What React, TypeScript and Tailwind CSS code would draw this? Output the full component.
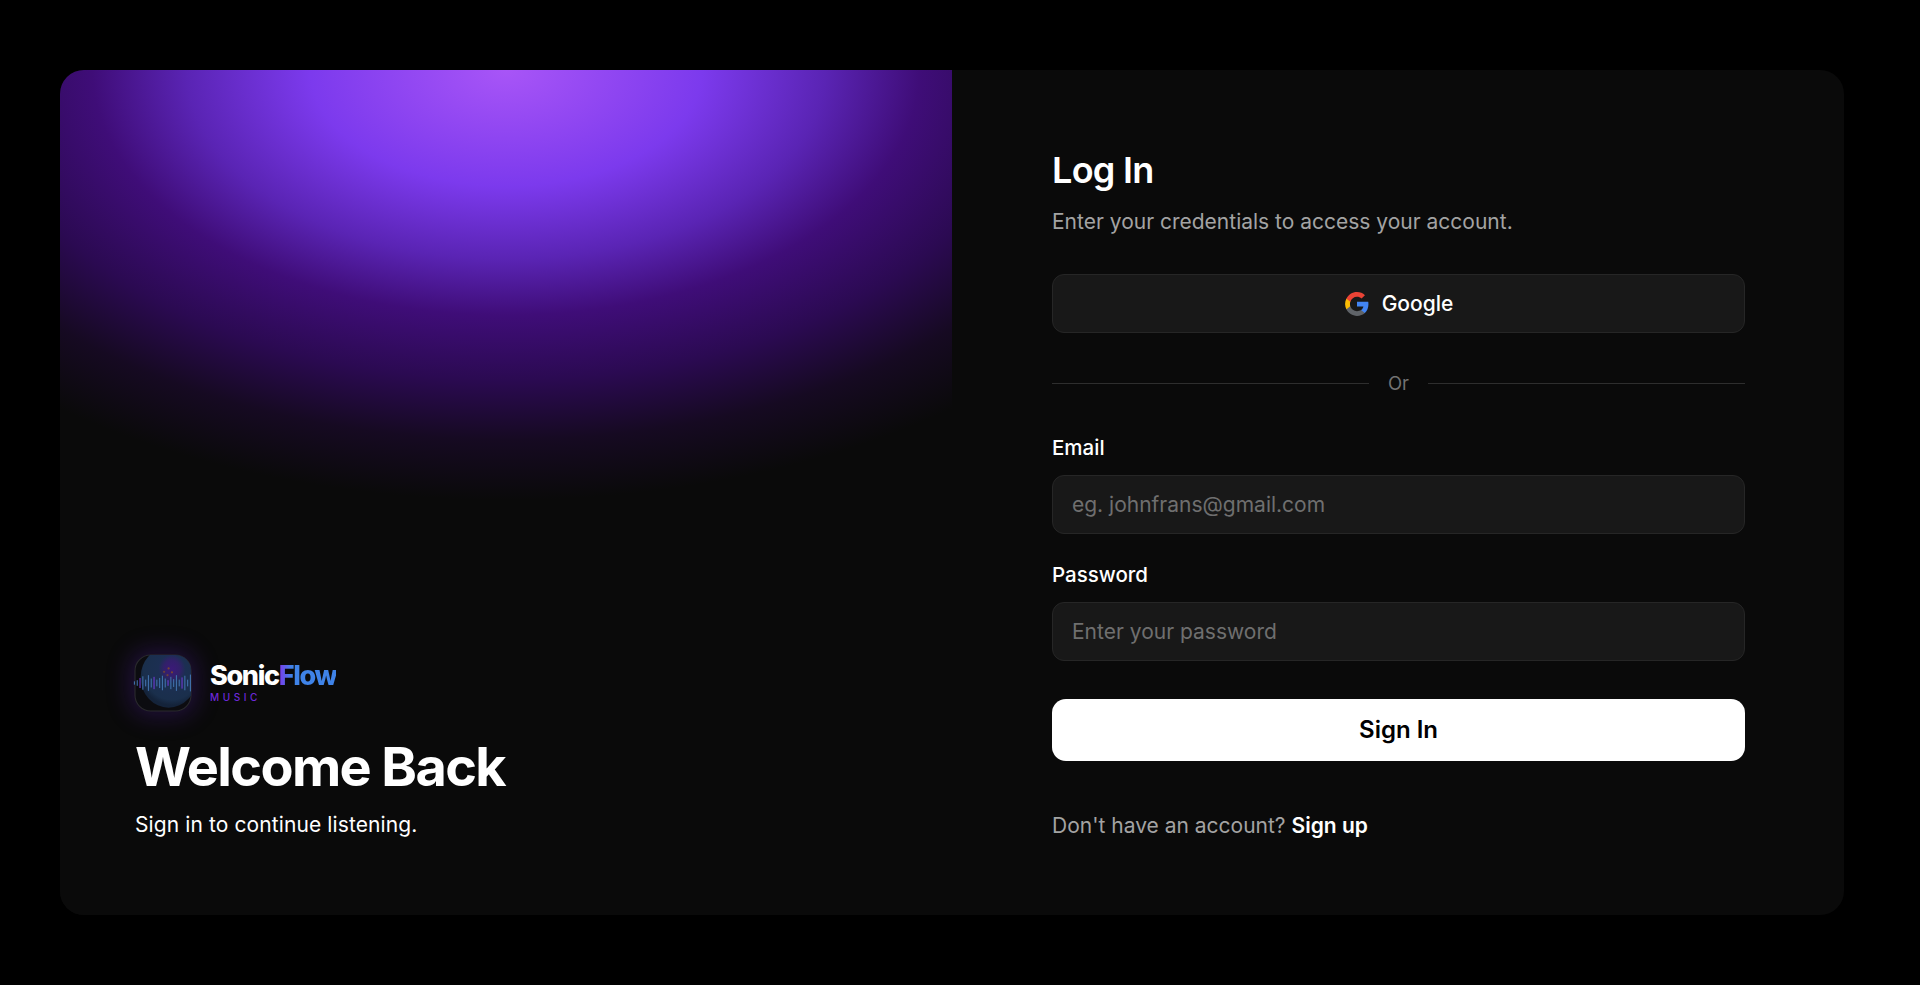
const bars = [
  [-1, 3], [4, 5], [9, 9], [14, 12], [19, 6], [24, 14], [29, 8], [34, 11], [39, 6], [44, 9], [49, 13], [54, 8],
  [59, 5], [64, 11], [69, 7], [74, 14], [79, 6], [84, 10], [89, 13], [94, 6], [99, 15],
];

const SonicLogo = () => (
  <div className="w-[56px] h-[56px] rounded-[16px] shadow-[0_0_22px_7px_rgba(76,29,149,0.32)] shrink-0">
    <svg viewBox="0 0 100 100" className="w-full h-full overflow-visible">
      <defs>
        <radialGradient id="orb" cx="56%" cy="36%" r="60%">
          <stop offset="0%" stopColor="#3b1a78" />
          <stop offset="24%" stopColor="#32206a" />
          <stop offset="40%" stopColor="#1c2f52" />
          <stop offset="85%" stopColor="#1a2f4c" />
          <stop offset="100%" stopColor="#14233a" />
        </radialGradient>
        <clipPath id="logoClip">
          <rect x="0" y="0" width="100" height="100" rx="28" />
        </clipPath>
      </defs>
      <rect x="0" y="0" width="100" height="100" rx="28" fill="#0c0c10" stroke="#2a2a2d" strokeWidth="2" />
      <g clipPath="url(#logoClip)">
        <ellipse cx="60" cy="40" rx="50" ry="54" fill="url(#orb)" />
      </g>
      <circle cx="60" cy="24" r="2" fill="#a16207" opacity="0.6" />
      <circle cx="52" cy="30" r="2" fill="#a16207" opacity="0.5" />
      <circle cx="66" cy="31" r="2" fill="#a16207" opacity="0.6" />
      <circle cx="58" cy="36" r="2" fill="#a16207" opacity="0.5" />
      {bars.map(([x, h], i) => (
        <rect key={x} x={x - 1} y={50 - h} width="2" height={h * 2} fill={i % 5 === 2 ? "#6d3bd0" : "#3f6ea8"} />
      ))}
    </svg>
  </div>
);

const GoogleIcon = () => (
  <svg viewBox="0 0 24 24" className="w-[26px] h-[26px]">
    <path fill="#4285F4" d="M22.56 12.25c0-.78-.07-1.53-.2-2.25H12v4.26h5.92c-.26 1.37-1.04 2.53-2.21 3.31v2.77h3.57c2.08-1.92 3.28-4.74 3.28-8.09z" />
    <path fill="#5f6368" d="M12 23c2.97 0 5.46-.98 7.28-2.66l-3.57-2.77c-.98.66-2.23 1.06-3.71 1.06-2.86 0-5.29-1.93-6.16-4.53H2.18v2.84C3.99 20.53 7.7 23 12 23z" />
    <path fill="#FBBC05" d="M5.84 14.09c-.22-.66-.35-1.36-.35-2.09s.13-1.43.35-2.09V7.07H2.18C1.43 8.55 1 10.22 1 12s.43 3.45 1.18 4.93l3.66-2.84z" />
    <path fill="#EA4335" d="M12 5.38c1.62 0 3.06.56 4.21 1.64l3.15-3.15C17.45 2.09 14.97 1 12 1 7.7 1 3.99 3.47 2.18 7.07l3.66 2.84c.87-2.6 3.3-4.53 6.16-4.53z" />
  </svg>
);

const Field = ({ label, placeholder, type }: { label: string; placeholder: string; type: string }) => (
  <div>
    <label className="block text-[20.5px] leading-[28px] font-medium text-white mb-[13px]">{label}</label>
    <input
      type={type}
      placeholder={placeholder}
      className="w-full h-[59px] px-[19px] rounded-[12px] bg-[#181818] border border-[#262626] text-[21px] text-white placeholder:text-[#6f6f6f] outline-none"
    />
  </div>
);

export default function App() {
  return (
    <div className="min-h-screen bg-black pl-[60px] pr-[76px] py-[70px] font-['Inter',sans-serif]">
      <div className="h-[845px] flex rounded-[24px] overflow-hidden bg-[#0a0a0a]">
        {/* Left panel */}
        <div className="w-[892px] h-full flex flex-col justify-end px-[75px] pb-[76px] bg-[radial-gradient(ellipse_725px_430px_at_50%_0%,#a855f7_0%,#7c3aed_27%,#5a24b4_44%,#3f0d78_57%,#2b0a52_72%,#160a22_86%,#0a0a0a_100%)]">
          <div className="flex items-center gap-[19px]">
            <SonicLogo />
            <div className="mb-[3px]">
              <div className="text-[27px] leading-[30px] font-extrabold tracking-[-0.05em] text-white">
                Sonic
                <span className="bg-[linear-gradient(90deg,#7c3aed_0%,#3f83e8_22%)] bg-clip-text text-transparent">Flow</span>
              </div>
              <div className="text-[10px] leading-[12px] font-medium tracking-[0.36em] text-[#6d28d9]">MUSIC</div>
            </div>
          </div>
          <h1 className="mt-[22px] text-[54px] leading-[68px] font-bold tracking-[-0.03em] text-white">Welcome Back</h1>
          <p className="mt-[10px] text-[21px] tracking-[0.005em] leading-[28px] text-white">Sign in to continue listening.</p>
        </div>

        {/* Right panel */}
        <div className="flex-1 h-full flex flex-col pl-[100px] pr-[99px] pt-[76px]">
          <h2 className="text-[36px] leading-[48px] font-semibold tracking-[-0.02em] text-white">Log In</h2>
          <p className="mt-[14px] text-[21px] leading-[28px] text-[#a3a3a3]">Enter your credentials to access your account.</p>

          <button className="mt-[38px] h-[59px] flex items-center justify-center gap-[12px] rounded-[12px] bg-[#181818] border border-[#262626] text-[21px] font-medium text-white">
            <GoogleIcon />
            Google
          </button>

          <div className="mt-[38px] flex items-center gap-[19px]">
            <div className="flex-1 h-px bg-[#2e2e2e]" />
            <span className="text-[18.5px] leading-[24px] text-[#737373]">Or</span>
            <div className="flex-1 h-px bg-[#2e2e2e]" />
          </div>

          <div className="mt-[39px] flex flex-col gap-[27px]">
            <Field label="Email" placeholder="eg. johnfrans@gmail.com" type="email" />
            <Field label="Password" placeholder="Enter your password" type="password" />
          </div>

          <button className="mt-[38px] h-[62px] rounded-[14px] bg-white text-[24px] font-semibold text-black">Sign In</button>

          <p className="mt-[51px] text-[21px] leading-[28px] text-[#a3a3a3]">
            Don't have an account? <a className="font-semibold text-white">Sign up</a>
          </p>
        </div>
      </div>
    </div>
  );
}
